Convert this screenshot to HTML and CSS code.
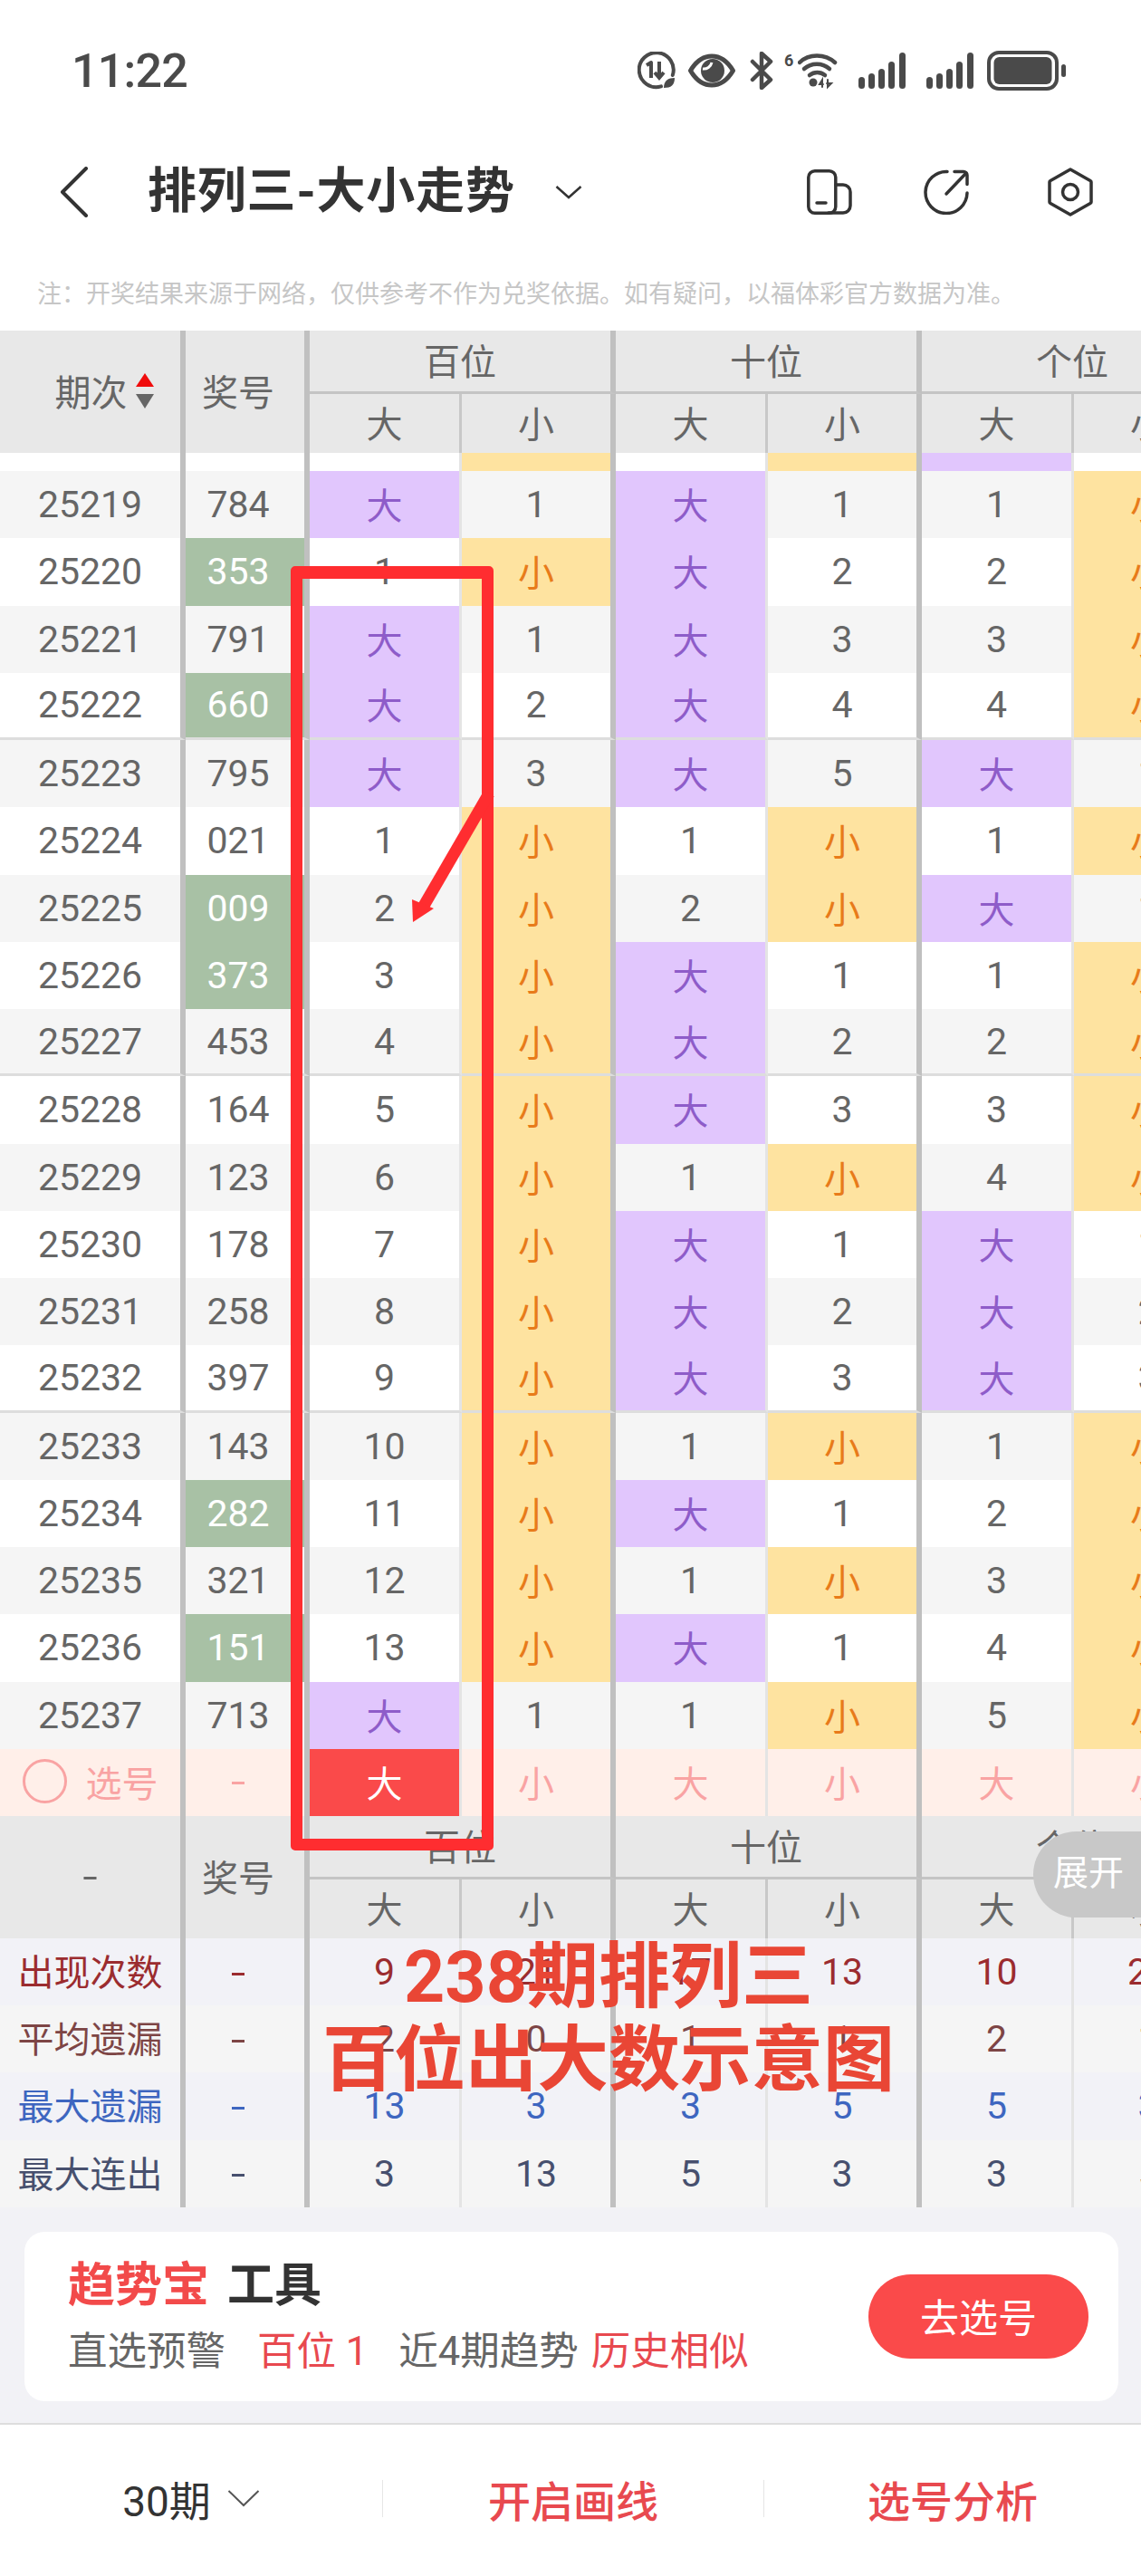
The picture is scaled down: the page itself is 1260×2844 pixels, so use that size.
FILE: index.html
```html
<!DOCTYPE html>
<html lang="zh-CN">
<head>
<meta charset="utf-8">
<title>排列三-大小走势</title>
<link rel="stylesheet" href="styles.css">
</head>
<body>
<div class="page">
  <div class="status">
    <span class="time">11:22</span>
    <div class="status-icons">
      <svg class="ic-data" width="42" height="42" viewBox="0 0 42 42" fill="none" stroke="#4a4a4a"><path d="M26 38.400A19 19 0 1 1 38.800 26" stroke-width="4" stroke-linecap="round"/><path d="M10 15l5-3v17" stroke-width="4" stroke-linejoin="round"/><path d="M24 11v18M19 23l5 6 5-6" stroke-width="4"/><path d="M29 40c0-8 5-11 12-11 0 8-4 11-12 11z" fill="#4a4a4a" stroke="none"/></svg>
      <svg class="ic-eye" width="52" height="38" viewBox="0 0 52 38" fill="none"><path d="M2.500 19C9 8 17 3 26 3s17 5 23.500 16C43 30 35 35 26 35S9 30 2.500 19z" stroke="#4a4a4a" stroke-width="5" stroke-linejoin="round"/><circle cx="27" cy="19" r="13" fill="#4a4a4a"/><path d="M16 18a9 9 0 0 0 10-7" stroke="#fff" stroke-width="3" transform="translate(0 -1)"/></svg>
      <svg class="ic-bt" width="26" height="42" viewBox="0 0 26 42" fill="none"><path d="M3 11l20 20-10 9V2l10 9L3 31" stroke="#4a4a4a" stroke-width="4.500" stroke-linejoin="round" stroke-linecap="round"/></svg>
      <div class="wifi">
        <span class="six">6</span>
        <svg width="44" height="42" viewBox="0 0 44 42" fill="none" stroke="#4a4a4a" stroke-width="4.500" stroke-linecap="round"><path d="M2 12C12 2 30 2 41 12"/><path d="M7 19c8-7 20-7 28 0"/><path d="M13 26c5-4 12-4 17 0"/><circle cx="17" cy="34" r="4.500" fill="#4a4a4a" stroke="none"/><path d="M27 39v-8l-3 5h4M33 31v8l4-4h-5" stroke-width="2"/></svg>
      </div>
      <svg class="ic-sig" width="52" height="42" viewBox="0 0 52 42"><g fill="#4a4a4a"><rect x="0" y="27" width="7" height="13" rx="3.500"/><rect x="11" y="23" width="7" height="17" rx="3.500"/><rect x="22" y="18" width="7" height="22" rx="3.500"/><rect x="33" y="10" width="7" height="30" rx="3.500"/><rect x="45" y="0" width="7" height="40" rx="3.500"/></g></svg>
      <svg class="ic-sig" width="52" height="42" viewBox="0 0 52 42"><g fill="#4a4a4a"><rect x="0" y="27" width="7" height="13" rx="3.500"/><rect x="11" y="23" width="7" height="17" rx="3.500"/><rect x="22" y="18" width="7" height="22" rx="3.500"/><rect x="33" y="10" width="7" height="30" rx="3.500"/><rect x="45" y="0" width="7" height="40" rx="3.500"/></g></svg>
      <svg class="ic-bat" width="88" height="44" viewBox="0 0 88 44"><rect x="2" y="2" width="75" height="40" rx="11" fill="none" stroke="#4a4a4a" stroke-width="4"/><rect x="7.500" y="7" width="64" height="30" rx="6" fill="#4a4a4a"/><rect x="82" y="15" width="5" height="14" rx="2.500" fill="#4a4a4a"/></svg>
    </div>
  </div>

  <div class="nav">
    <svg class="back" width="34" height="56" viewBox="0 0 34 56" fill="none"><path d="M30 2L4 28l26 26" stroke="#333" stroke-width="4" stroke-linecap="round" stroke-linejoin="round"/></svg>
    <h1 class="title">排列三-大小走势</h1>
    <svg class="drop" width="30" height="16" viewBox="0 0 30 16" fill="none"><path d="M1.500 2L15 14 28.500 2" stroke="#333" stroke-width="2.500"/></svg>
    <div class="nav-icons">
      <svg width="50" height="50" viewBox="0 0 50 50" fill="none" stroke="#333" stroke-width="3.500" stroke-linecap="round" stroke-linejoin="round"><rect x="1.800" y="1.800" width="30" height="46.400" rx="7"/><path d="M32 17h8a8 8 0 0 1 8 8v15a8 8 0 0 1-8 8H24"/><path d="M11 37h10"/></svg>
      <svg width="50" height="50" viewBox="0 0 50 50" fill="none" stroke="#333" stroke-width="3.500" stroke-linecap="round" stroke-linejoin="round"><path d="M26 2.500A23 23 0 1 0 48 26"/><path d="M25 27L47 4"/><path d="M34 2.500h10a4 4 0 0 1 4 4v10"/></svg>
      <svg class="ic-hex" width="50" height="54" viewBox="0 0 50 54" fill="none" stroke="#333" stroke-width="3.500" stroke-linejoin="round"><path d="M25 2l22 12.500a2 2 0 0 1 1 2v21a2 2 0 0 1-1 2L25 52 3 39.500a2 2 0 0 1-1-2v-21a2 2 0 0 1 1-2z"/><circle cx="25" cy="27" r="8.500"/></svg>
    </div>
  </div>

  <p class="note">注：开奖结果来源于网络，仅供参考不作为兑奖依据。如有疑问，以福体彩官方数据为准。</p>

  <div class="table">
    <div class="head">
      <div class="hc span2 thick period">期次<span class="sort"><i class="up"></i><i class="down"></i></span></div>
      <div class="hc span2 thick">奖号</div>
      <div class="hc group thick">百位</div>
      <div class="hc group thick">十位</div>
      <div class="hc group thick">个位</div>
      <div class="hc thin">大</div><div class="hc thick">小</div>
      <div class="hc thin">大</div><div class="hc thick">小</div>
      <div class="hc thin">大</div><div class="hc thick">小</div>
    </div>

    <div class="row stub">
      <div class="c k"></div><div class="c k"></div><div class="c n"></div><div class="c k x"></div><div class="c n"></div><div class="c k x"></div><div class="c n d"></div><div class="c k"></div>
    </div>

    <div class="row even"><div class="c k">25219</div><div class="c k">784</div><div class="c n d">大</div><div class="c k">1</div><div class="c n d">大</div><div class="c k">1</div><div class="c n">1</div><div class="c k x">小</div></div>
    <div class="row"><div class="c k">25220</div><div class="c k g">353</div><div class="c n">1</div><div class="c k x">小</div><div class="c n d">大</div><div class="c k">2</div><div class="c n">2</div><div class="c k x">小</div></div>
    <div class="row even"><div class="c k">25221</div><div class="c k">791</div><div class="c n d">大</div><div class="c k">1</div><div class="c n d">大</div><div class="c k">3</div><div class="c n">3</div><div class="c k x">小</div></div>
    <div class="row sep"><div class="c k">25222</div><div class="c k g">660</div><div class="c n d">大</div><div class="c k">2</div><div class="c n d">大</div><div class="c k">4</div><div class="c n">4</div><div class="c k x">小</div></div>
    <div class="row even"><div class="c k">25223</div><div class="c k">795</div><div class="c n d">大</div><div class="c k">3</div><div class="c n d">大</div><div class="c k">5</div><div class="c n d">大</div><div class="c k">1</div></div>
    <div class="row"><div class="c k">25224</div><div class="c k">021</div><div class="c n">1</div><div class="c k x">小</div><div class="c n">1</div><div class="c k x">小</div><div class="c n">1</div><div class="c k x">小</div></div>
    <div class="row even"><div class="c k">25225</div><div class="c k g">009</div><div class="c n">2</div><div class="c k x">小</div><div class="c n">2</div><div class="c k x">小</div><div class="c n d">大</div><div class="c k">1</div></div>
    <div class="row"><div class="c k">25226</div><div class="c k g">373</div><div class="c n">3</div><div class="c k x">小</div><div class="c n d">大</div><div class="c k">1</div><div class="c n">1</div><div class="c k x">小</div></div>
    <div class="row even sep"><div class="c k">25227</div><div class="c k">453</div><div class="c n">4</div><div class="c k x">小</div><div class="c n d">大</div><div class="c k">2</div><div class="c n">2</div><div class="c k x">小</div></div>
    <div class="row"><div class="c k">25228</div><div class="c k">164</div><div class="c n">5</div><div class="c k x">小</div><div class="c n d">大</div><div class="c k">3</div><div class="c n">3</div><div class="c k x">小</div></div>
    <div class="row even"><div class="c k">25229</div><div class="c k">123</div><div class="c n">6</div><div class="c k x">小</div><div class="c n">1</div><div class="c k x">小</div><div class="c n">4</div><div class="c k x">小</div></div>
    <div class="row"><div class="c k">25230</div><div class="c k">178</div><div class="c n">7</div><div class="c k x">小</div><div class="c n d">大</div><div class="c k">1</div><div class="c n d">大</div><div class="c k">1</div></div>
    <div class="row even"><div class="c k">25231</div><div class="c k">258</div><div class="c n">8</div><div class="c k x">小</div><div class="c n d">大</div><div class="c k">2</div><div class="c n d">大</div><div class="c k">2</div></div>
    <div class="row sep"><div class="c k">25232</div><div class="c k">397</div><div class="c n">9</div><div class="c k x">小</div><div class="c n d">大</div><div class="c k">3</div><div class="c n d">大</div><div class="c k">3</div></div>
    <div class="row even"><div class="c k">25233</div><div class="c k">143</div><div class="c n">10</div><div class="c k x">小</div><div class="c n">1</div><div class="c k x">小</div><div class="c n">1</div><div class="c k x">小</div></div>
    <div class="row"><div class="c k">25234</div><div class="c k g">282</div><div class="c n">11</div><div class="c k x">小</div><div class="c n d">大</div><div class="c k">1</div><div class="c n">2</div><div class="c k x">小</div></div>
    <div class="row even"><div class="c k">25235</div><div class="c k">321</div><div class="c n">12</div><div class="c k x">小</div><div class="c n">1</div><div class="c k x">小</div><div class="c n">3</div><div class="c k x">小</div></div>
    <div class="row"><div class="c k">25236</div><div class="c k g">151</div><div class="c n">13</div><div class="c k x">小</div><div class="c n d">大</div><div class="c k">1</div><div class="c n">4</div><div class="c k x">小</div></div>
    <div class="row even"><div class="c k">25237</div><div class="c k">713</div><div class="c n d">大</div><div class="c k">1</div><div class="c n">1</div><div class="c k x">小</div><div class="c n">5</div><div class="c k x">小</div></div>

    <div class="row pick">
      <div class="c k"><span class="radio"></span>选号</div><div class="c k dash">-</div><div class="c n chosen">大</div><div class="c k">小</div><div class="c n">大</div><div class="c k">小</div><div class="c n">大</div><div class="c k">小</div>
    </div>

    <div class="head">
      <div class="hc span2 thick dash">-</div>
      <div class="hc span2 thick">奖号</div>
      <div class="hc group thick">百位</div>
      <div class="hc group thick">十位</div>
      <div class="hc group thick">个位</div>
      <div class="hc thin">大</div><div class="hc thick">小</div>
      <div class="hc thin">大</div><div class="hc thick">小</div>
      <div class="hc thin">大</div><div class="hc thick">小</div>
    </div>

    <div class="row stat s1"><div class="c k label">出现次数</div><div class="c k dash">-</div><div class="c n">9</div><div class="c k">21</div><div class="c n">17</div><div class="c k">13</div><div class="c n">10</div><div class="c k">20</div></div>
    <div class="row stat s2"><div class="c k label">平均遗漏</div><div class="c k dash">-</div><div class="c n">2</div><div class="c k">0</div><div class="c n">1</div><div class="c k">1</div><div class="c n">2</div><div class="c k">1</div></div>
    <div class="row stat s3"><div class="c k label">最大遗漏</div><div class="c k dash">-</div><div class="c n">13</div><div class="c k">3</div><div class="c n">3</div><div class="c k">5</div><div class="c n">5</div><div class="c k">3</div></div>
    <div class="row stat s4"><div class="c k label">最大连出</div><div class="c k dash">-</div><div class="c n">3</div><div class="c k">13</div><div class="c n">5</div><div class="c k">3</div><div class="c n">3</div><div class="c k">5</div></div>

    <div class="frame"></div>
    <svg class="arrow" width="100" height="160" viewBox="0 0 100 160" fill="none"><path d="M90 6L18 130" stroke="#ff2d30" stroke-width="13"/><path d="M6 148L5 123 29 133z" fill="#ff2d30"/></svg>
    <div class="expand">展开</div>
    <div class="caption">238期排列三<br>百位出大数示意图</div>
  </div>

  <div class="promo">
    <div class="card">
      <div class="card-text">
        <div class="card-title"><span class="red">趋势宝</span><span class="tool">工具</span></div>
        <div class="card-sub"><span>直选预警</span><span class="pink pos">百位 1</span><span class="trend">近4期趋势</span><span class="pink hist">历史相似</span></div>
      </div>
      <div class="go">去选号</div>
    </div>
  </div>

  <div class="bottom">
    <div class="tab dark">30期<svg width="36" height="20" viewBox="0 0 36 20" fill="none"><path d="M1.500 2L18 18 34.500 2" stroke="#555" stroke-width="2"/></svg></div>
    <div class="tab line">开启画线</div>
    <div class="tab line">选号分析</div>
  </div>
</div>
</body>
</html>
```
FILE: styles.css
```css
* { box-sizing: border-box; }
html, body { margin: 0; padding: 0; background: #fff; }
body { font-family: Roboto, "Noto Sans CJK SC", sans-serif; color: #666; }
.page { width: 1260px; height: 2844px; overflow: hidden; display: flex; flex-direction: column; }

/* status bar */
.status { height: 158px; flex: none; display: flex; justify-content: space-between; padding: 56px 82px 0 79px; color: #4a4a4a; }
.time { font-size: 52px; line-height: 46px; font-weight: 500; letter-spacing: -.8px; }
.status-icons { display: flex; align-items: flex-start; height: 44px; }
.ic-data { margin-top: 1px; }
.ic-eye { margin: 3px 0 0 14px; }
.ic-bt { margin: 1px 0 0 16px; }
.wifi { display: flex; margin: 1px 0 0 12px; width: 59px; }
.six { font-size: 18px; line-height: 20px; font-weight: 700; width: 15px; }
.ic-sig { margin: 2px 0 0 23px; }
.ic-sig + .ic-sig { margin-left: 23px; }
.ic-bat { margin-left: 15px; }

/* nav */
.nav { height: 108px; flex: none; display: flex; align-items: center; padding: 0 53px 0 65px; }
.back { flex: none; }
.title { margin: 0 0 0 64px; font-size: 54px; line-height: 64px; font-weight: 700; color: #333; white-space: nowrap; width: 404px; letter-spacing: .8px; }
.drop { margin-left: 46px; flex: none; }
.nav-icons { margin-left: auto; display: flex; align-items: center; gap: 79px; }
.ic-hex { margin-left: 8px; }

.note { margin: 0; height: 99px; flex: none; padding: 44px 0 0 41px; font-size: 27px; line-height: 30px; color: #c6c6c6; white-space: nowrap; }

/* table */
.table { position: relative; flex: none; width: 1260px; height: 2072px; overflow: hidden; font-size: 40px; }
.head, .row { display: grid; width: 1356px; grid-template-columns: 205px 137px 168px 170px 168px 170px 168px 170px; }
.head { grid-template-rows: 70px 65px; background: #e8e8e8; }
.hc { display: flex; align-items: center; justify-content: center; color: #666; padding-bottom: 3px; }
.hc.thin { border-right: 3px solid #c8c8c8; }
.hc.thick { border-right: 6px solid #c0c0c0; }
.hc:nth-child(2) { padding-right: 15px; }
.span2 { grid-row: span 2; }
.group { grid-column: span 2; border-bottom: 3px solid #c4c4c4; }
.period { padding-left: 31px; }
.sort { display: flex; flex-direction: column; gap: 8px; margin-left: 9px; }
.sort i { display: block; width: 0; height: 0; border-left: 10px solid transparent; border-right: 10px solid transparent; }
.sort .up { border-bottom: 15px solid #f00c0c; }
.sort .down { border-top: 16px solid #666; }

.row { height: 74.260px; background: #fff; }
.row.even { background: #f5f5f5; }
.row.stub { height: 20px; }
.c { display: flex; align-items: center; justify-content: center; color: #666; white-space: nowrap; font-size: 41px; }
.c.n { border-right: 3px solid #e4e4e4; }
.c.k { border-right: 6px solid #c0c0c0; }
.c:nth-child(2) { padding-right: 15px; }
.row.sep .c { border-bottom: 3px solid #ddd; }
.c.d { background: #e1c6fd; color: #8e5cc9; font-size: 40px; padding-bottom: 2px; }
.c.x { background: #fee3a0; color: #e87b1a; font-size: 40px; padding-bottom: 2px; }
.c.g { background: #a8c1a5; color: #fff; }
.c.label { font-size: 40px; padding-bottom: 4px; }
.dash, .c.dash { font-size: 60px; font-weight: 300; }

.row.pick { background: #ffefe9; }
.pick .c { color: #f9a3a3; font-size: 40px; padding-bottom: 2px; }
.pick .c.dash { font-size: 60px; }
.pick .c.chosen { background: #fa4a4a; color: #fff; }
.radio { width: 49px; height: 49px; border: 3px solid #f9a3a3; border-radius: 50%; margin-right: 21px; }

.row.stat { height: 74.200px; }
.row.s1, .row.s3 { background: #f2f2f7; }
.row.s2, .row.s4 { background: #f5f5f5; }
.s1 .c { color: #9b2c2f; }
.s2 .c { color: #7d4545; }
.s3 .c { color: #3e66c0; }
.s4 .c { color: #47506e; }

/* annotations drawn over the table */
.frame { position: absolute; left: 321px; top: 260px; width: 224px; height: 1418px; border: 13px solid #ff2d30; border-top-width: 14px; border-radius: 5px; }
.arrow { position: absolute; left: 450px; top: 505px; }
.expand { position: absolute; right: -50px; top: 1657px; width: 169px; height: 95px; border-radius: 48px; background: #c8c8c8; color: #fff; font-size: 39px; line-height: 92px; padding-left: 22px; }
.caption { position: absolute; left: 352px; top: 1772px; width: 640px; text-align: center; color: #e94635; font-size: 79px; line-height: 92px; font-weight: 700; white-space: nowrap; }

/* promo */
.promo { height: 240px; flex: none; background: #f2f2f6; padding: 27px 25px 0 27px; border-bottom: 2px solid #ddd; }
.card { height: 187px; background: #fff; border-radius: 22px; display: flex; align-items: center; justify-content: space-between; padding: 0 33px 0 48px; }
.card-title { font-size: 52px; line-height: 64px; font-weight: 700; color: #333; }
.red { color: #f24a4a; }
.tool { margin-left: 20px; }
.card-sub { margin-top: 14px; font-size: 43.500px; line-height: 54px; color: #666; white-space: nowrap; display: flex; }
.pink { color: #e8494f; }
.pos { margin-left: 35px; }
.trend { margin-left: 34px; }
.hist { margin-left: 14px; }
.go { width: 243px; height: 93px; border-radius: 47px; background: #fa4a4a; color: #fff; font-size: 43px; display: flex; align-items: center; justify-content: center; margin-top: -1px; padding-bottom: 3px; }

/* bottom */
.bottom { flex: 1; display: grid; grid-template-columns: 422px 421px 417px; align-items: center; padding-bottom: 5px; }
.tab { height: 41px; display: flex; align-items: center; justify-content: center; font-size: 47px; white-space: nowrap; }
.tab.dark { color: #333; gap: 18px; font-size: 46px; }
.tab.line { border-left: 1px solid #e6e6e6; color: #e8494f; font-weight: 500; }
```
